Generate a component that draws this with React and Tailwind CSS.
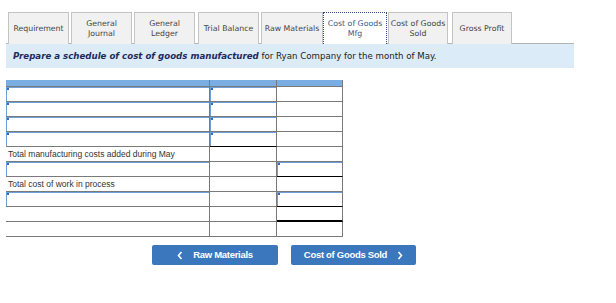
import React from 'react'

const tabs = [
  { label: ['Requirement'], w: 'w-[61px]', ml: 'ml-0' },
  { label: ['General', 'Journal'], w: 'w-[61px]', ml: 'ml-[2px]' },
  { label: ['General', 'Ledger'], w: 'w-[61px]', ml: 'ml-[2px]' },
  { label: ['Trial Balance'], w: 'w-[61px]', ml: 'ml-[3px]' },
  { label: ['Raw Materials'], w: 'w-[62px]', ml: 'ml-[2px]' },
  { label: ['Cost of Goods', 'Mfg'], w: 'w-[64px]', ml: 'ml-0', active: true },
  { label: ['Cost of Goods', 'Sold'], w: 'w-[60px]', ml: 'ml-[1px]' },
  { label: ['Gross Profit'], w: 'w-[60px]', ml: 'ml-[4px]' },
]

// col widths: 203 / 67 / 65
const W = ['w-[204px]', 'w-[67px]', 'w-[66px]']

function Cell({ col, input, under, dbl, children }) {
  const bottom = dbl
    ? 'border-b-2 border-b-black'
    : under
      ? 'border-b border-b-black'
      : 'border-b border-b-[#7a7a7a]'
  return (
    <div className={`${W[col]} relative h-[15px] shrink-0 border-r border-r-[#7a7a7a] ${bottom}`}>
      {input && (
        <div className="absolute inset-0 border-l border-t border-[#6f9fd8] bg-white">
          <div className="absolute left-0 top-0 h-[2px] w-[2px] bg-[#2d6cc0]" />
        </div>
      )}
      {children && (
        <div className="pl-[2px] pt-[2px] text-[8.5px] leading-[11px] text-[#333]" style={{ fontFamily: '"Liberation Sans", Arial, sans-serif' }}>
          {children}
        </div>
      )}
    </div>
  )
}

function Row({ cells }) {
  return (
    <div className="flex">
      {cells.map((c, i) => (
        <Cell key={i} col={i} {...c} />
      ))}
    </div>
  )
}

function Chevron({ left }) {
  return (
    <svg width="6" height="9" viewBox="0 0 6 9" className="shrink-0">
      <polyline
        points={left ? '4.5,1 1.5,4.5 4.5,8' : '1.5,1 4.5,4.5 1.5,8'}
        fill="none"
        stroke="white"
        strokeWidth="1.6"
      />
    </svg>
  )
}

export default function App() {
  const rows = [
    [{ input: true }, { input: true }, {}],
    [{ input: true }, { input: true }, {}],
    [{ input: true }, { input: true }, {}],
    [{ input: true }, { input: true, under: true }, {}],
    [{ children: 'Total manufacturing costs added during May' }, {}, {}],
    [{ input: true }, {}, { input: true, under: true }],
    [{ children: 'Total cost of work in process' }, {}, {}],
    [{ input: true }, {}, { input: true, under: true }],
    [{}, {}, { dbl: true }],
    [{}, {}, {}],
  ]

  return (
    <div className="h-[303px] w-[616px] bg-white" style={{ fontFamily: '"DejaVu Sans", Verdana, sans-serif' }}>
      <div className="ml-[6px] w-[568px] pt-[12px]">
        <div className="flex h-[32px] items-start border-b border-[#b4b4b4] pl-[2px]">
          {tabs.map((t, i) => (
            <div
              key={i}
              className={`${t.w} ${t.ml} flex h-[32px] shrink-0 flex-col items-center justify-center text-center text-[7.8px] leading-[10px] ${
                t.active
                  ? 'relative z-10 border border-b-0 border-dotted border-[#274a7a] bg-white text-[#3a5a8c]'
                  : 'h-[31px] border border-b-0 border-[#c4c4c4] bg-[#f1f1f1] text-[#444]'
              }`}
            >
              {t.label.map((l) => (
                <span key={l} className="whitespace-nowrap">{l}</span>
              ))}
            </div>
          ))}
        </div>
        <div className="flex h-[24px] items-center bg-[#dcebf8] pl-[7px] text-[8.65px] text-[#222]">
          <span className="font-bold italic text-[#1e2a5c]">Prepare a schedule of cost of goods manufactured</span>
          <span className="whitespace-pre"> for Ryan Company for the month of May.</span>
        </div>

        <div className="mt-[12px] w-[337px]">
          <div className="flex">
            {W.map((w, i) => (
              <div key={i} className={`${w} h-[7px] shrink-0 border-b border-r border-[#7a7a7a] bg-[#7aaee3]`} />
            ))}
          </div>
          {rows.map((r, i) => (
            <Row key={i} cells={r} />
          ))}
        </div>

        <div className="ml-[146px] mt-[8px] flex gap-[13px]" style={{ fontFamily: '"Liberation Sans", Arial, sans-serif' }}>
          <button className="flex h-[20px] w-[126px] items-center justify-center gap-[10px] rounded-[2px] bg-[#3a77bd] text-[9.5px] font-bold tracking-[-0.3px] text-white">
            <Chevron left />
            <span>Raw Materials</span>
          </button>
          <button className="flex h-[20px] w-[125px] items-center justify-center gap-[10px] rounded-[2px] bg-[#3a77bd] text-[9.5px] font-bold tracking-[-0.3px] text-white">
            <span>Cost of Goods Sold</span>
            <Chevron />
          </button>
        </div>
      </div>
    </div>
  )
}
